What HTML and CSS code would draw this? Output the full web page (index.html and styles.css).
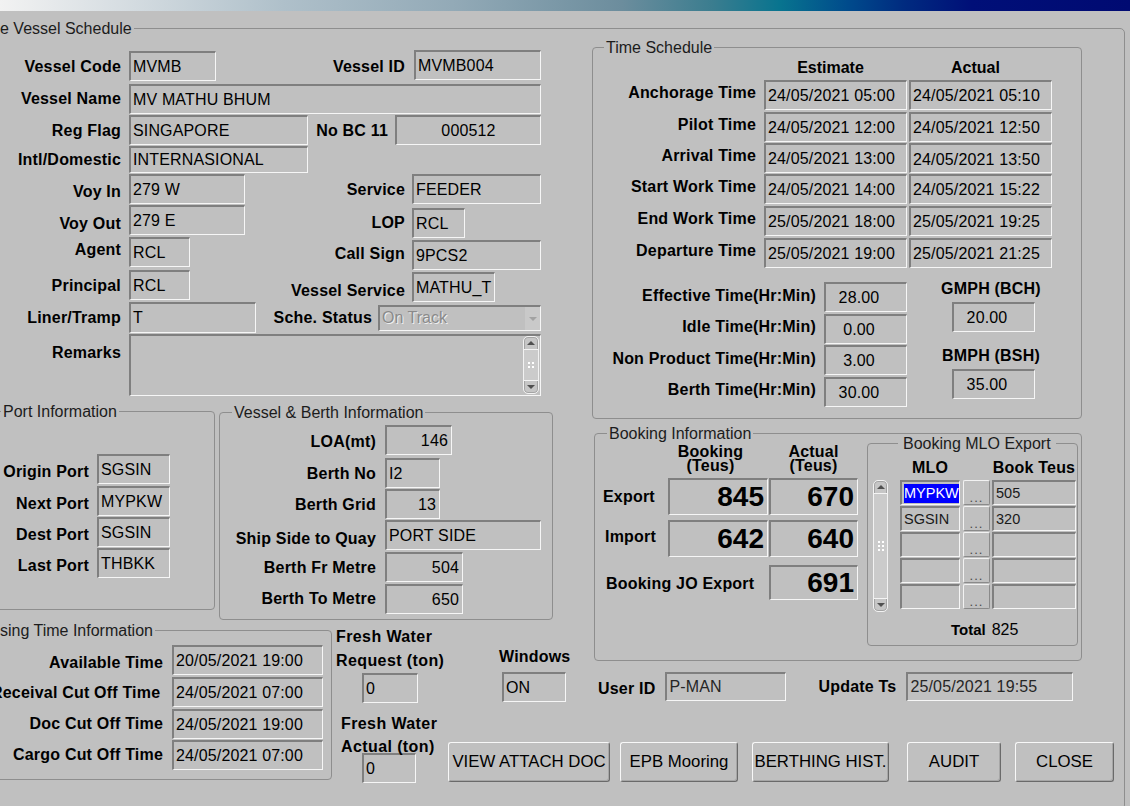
FILE: index.html
```html
<!DOCTYPE html>
<html>
<head>
<meta charset="utf-8">
<title>Vessel Schedule</title>
<link rel="stylesheet" href="styles.css">
</head>
<body>
<div class="titlebar"></div>
<fieldset class="grp frame">
  <legend class="lg lg-frame">e Vessel Schedule</legend>
  <div class="frame-grid">

    <div class="lt">
      <div class="vs-grid">
        <div class="lb c1">Vessel Code</div>
        <div class="fld c3 w87 mt1">MVMB</div>
        <div class="lb c4">Vessel ID</div>
        <div class="fld c6 w127 ml2">MVMB004</div>

        <div class="lb c1">Vessel Name</div>
        <div class="fld c3-7 mt1">MV MATHU BHUM</div>

        <div class="lb c1">Reg Flag</div>
        <div class="rowflex c3-7">
          <div class="fld w179">SINGAPORE</div>
          <div class="lb push">No BC 11</div>
          <div class="fld w146 ml7 ctr">000512</div>
        </div>

        <div class="lb c1">Intl/Domestic</div>
        <div class="fld c3 w179 h27">INTERNASIONAL</div>

        <div class="lb c1 dn5">Voy In</div>
        <div class="fld c3 w116">279 W</div>
        <div class="lb c4">Service</div>
        <div class="fld c6 w129">FEEDER</div>

        <div class="lb c1 dn6">Voy Out</div>
        <div class="fld c3 w116">279 E</div>
        <div class="lb c4 dn4">LOP</div>
        <div class="fld c6 w53 mt3">RCL</div>

        <div class="lb c1 up7">Agent</div>
        <div class="fld c3 w61">RCL</div>
        <div class="lb c4">Call Sign</div>
        <div class="fld c6 w129 mt3">9PCS2</div>

        <div class="lb c1">Principal</div>
        <div class="fld c3 w61">RCL</div>
        <div class="lb c4 dn10">Vessel Service</div>
        <div class="fld c6 w83 mt2">MATHU_T</div>

        <div class="lb c1">Liner/Tramp</div>
        <div class="rowflex c3-7">
          <div class="fld w127 h31">T</div>
          <div class="lb push">Sche. Status</div>
          <div class="combo ml6 mt3">
            <span class="combo-txt">On Track</span>
            <span class="combo-arrow"><span class="tri-dn light"></span></span>
          </div>
        </div>

        <div class="lb c1 top10">Remarks</div>
        <div class="fld memo c3-7">
          <div class="sb sb-memo">
            <div class="sb-btn sb-up"><span class="tri-up"></span></div>
            <div class="sb-track"><span class="grip grip2"></span></div>
            <div class="sb-btn sb-dn"><span class="tri-dn"></span></div>
          </div>
        </div>
      </div>

      <div class="pb">
        <fieldset class="grp port">
          <legend class="lg lg-port">Port Information</legend>
          <div class="port-grid">
            <div class="lb dn4">Origin Port</div><div class="fld w73">SGSIN</div>
            <div class="lb dn4">Next Port</div><div class="fld w73">MYPKW</div>
            <div class="lb dn4">Dest Port</div><div class="fld w73">SGSIN</div>
            <div class="lb dn4">Last Port</div><div class="fld w73">THBKK</div>
          </div>
        </fieldset>
        <fieldset class="grp berth">
          <legend class="lg lg-berth">Vessel &amp; Berth Information</legend>
          <div class="berth-grid">
            <div class="lb">LOA(mt)</div><div class="fld w67 r">146</div>
            <div class="lb">Berth No</div><div class="fld w55">I2</div>
            <div class="lb">Berth Grid</div><div class="fld w55 r">13</div>
            <div class="lb dn6">Ship Side to Quay</div><div class="fld w156">PORT SIDE</div>
            <div class="lb">Berth Fr Metre</div><div class="fld w78 r">504</div>
            <div class="lb">Berth To Metre</div><div class="fld w78 r">650</div>
          </div>
        </fieldset>
      </div>
    </div>

    <div class="rt">
      <fieldset class="grp ts">
        <legend class="lg lg-ts">Time Schedule</legend>
        <div class="ts-grid">
          <div></div><div class="hd">Estimate</div><div class="hd">Actual</div>
          <div class="lb tl">Anchorage Time</div><div class="fld w143">24/05/2021 05:00</div><div class="fld w143">24/05/2021 05:10</div>
          <div class="lb tl">Pilot Time</div><div class="fld w143">24/05/2021 12:00</div><div class="fld w143">24/05/2021 12:50</div>
          <div class="lb tl">Arrival Time</div><div class="fld w143">24/05/2021 13:00</div><div class="fld w143 lowtxt">24/05/2021 13:50</div>
          <div class="lb tl">Start Work Time</div><div class="fld w143">24/05/2021 14:00</div><div class="fld w143">24/05/2021 15:22</div>
          <div class="lb tl">End Work Time</div><div class="fld w143">25/05/2021 18:00</div><div class="fld w143">25/05/2021 19:25</div>
          <div class="lb tl">Departure Time</div><div class="fld w143">25/05/2021 19:00</div><div class="fld w143">25/05/2021 21:25</div>
        </div>
        <div class="eff">
          <div class="eff-grid">
            <div class="lb tl">Effective Time(Hr:Min)</div><div class="fld w83 c16">28.00</div>
            <div class="lb tl">Idle Time(Hr:Min)</div><div class="fld w83 c16">0.00</div>
            <div class="lb tl">Non Product Time(Hr:Min)</div><div class="fld w83 c16">3.00</div>
            <div class="lb tl">Berth Time(Hr:Min)</div><div class="fld w83 c16">30.00</div>
          </div>
          <div class="mph">
            <div class="lb mph-lb">GMPH (BCH)</div>
            <div class="fld w83 c16 mph-f">20.00</div>
            <div class="lb mph-lb mph-lb2">BMPH (BSH)</div>
            <div class="fld w83 c16 mph-f">35.00</div>
          </div>
        </div>
      </fieldset>

      <fieldset class="grp bk">
        <legend class="lg lg-bk">Booking Information</legend>
        <div class="bk-in">
          <div class="bk-grid">
            <div></div>
            <div class="bhd bhd-b"><div>Booking</div><div class="bhd2">(Teus)</div></div>
            <div class="bhd"><div>Actual</div><div class="bhd2">(Teus)</div></div>

            <div class="lb bl-exp">Export</div>
            <div class="fld big w100">845</div>
            <div class="fld big w89">670</div>

            <div class="lb bl-imp">Import</div>
            <div class="fld big w100 mt5">642</div>
            <div class="fld big w89 mt5">640</div>

            <div class="lb bl-jo">Booking JO Export</div>
            <div class="fld big w89 h35 mt8">691</div>
          </div>

          <fieldset class="grp mlo">
            <legend class="lg lg-mlo">Booking MLO Export</legend>
            <div class="mlo-head">
              <div class="mh w60">MLO</div>
              <div class="mh w84 mh2">Book Teus</div>
            </div>
            <div class="mlo-body">
              <div class="sb sb-mlo">
                <div class="sb-btn sb-up"><span class="tri-up"></span></div>
                <div class="sb-track"><span class="grip grip6"></span></div>
                <div class="sb-btn sb-dn"><span class="tri-dn"></span></div>
              </div>
              <div class="mlo-rows">
                <div class="mrow"><div class="fld sm w60"><span class="sel">MYPKW</span></div><div class="dots">...</div><div class="fld sm w84">505</div></div>
                <div class="mrow"><div class="fld sm w60">SGSIN</div><div class="dots">...</div><div class="fld sm w84">320</div></div>
                <div class="mrow"><div class="fld sm w60"></div><div class="dots">...</div><div class="fld sm w84"></div></div>
                <div class="mrow"><div class="fld sm w60"></div><div class="dots">...</div><div class="fld sm w84"></div></div>
                <div class="mrow"><div class="fld sm w60"></div><div class="dots">...</div><div class="fld sm w84"></div></div>
              </div>
            </div>
            <div class="total"><span class="tot-lb">Total</span><span class="tot-v">825</span></div>
          </fieldset>
        </div>
      </fieldset>

      <div class="user">
        <div class="lb ul1">User ID</div>
        <div class="fld w121 h29 ml10 dim">P-MAN</div>
        <div class="lb ul2">Update Ts</div>
        <div class="fld w167 h29 ml9 dim">25/05/2021 19:55</div>
      </div>
    </div>

    <fieldset class="grp closing">
      <legend class="lg lg-cl">sing Time Information</legend>
      <div class="cl-grid">
        <div class="lb dn4">Available Time</div><div class="fld w151">20/05/2021 19:00</div>
        <div class="lb pr6">Receival Cut Off Time</div><div class="fld w151">24/05/2021 07:00</div>
        <div class="lb up2">Doc Cut Off Time</div><div class="fld w151">24/05/2021 19:00</div>
        <div class="lb">Cargo Cut Off Time</div><div class="fld w151">24/05/2021 07:00</div>
      </div>
    </fieldset>

    <div class="fw">
      <div class="fw-t1">Fresh Water<br>Request (ton)</div>
      <div class="fld w56 fw-f1">0</div>
      <div class="fw-t2">Fresh Water<br>Actual (ton)</div>
      <div class="fld w54 fw-f2">0</div>
    </div>

    <div class="win">
      <div class="lb win-lb">Windows</div>
      <div class="fld w64 win-f">ON</div>
    </div>

    <div class="btns">
      <button class="btn b1">VIEW ATTACH DOC</button>
      <button class="btn b2">EPB Mooring</button>
      <button class="btn b3">BERTHING HIST.</button>
      <button class="btn b4">AUDIT</button>
      <button class="btn b5">CLOSE</button>
    </div>

  </div>
</fieldset>
</body>
</html>
```
FILE: styles.css
```css
* { box-sizing: border-box; }
html, body { margin: 0; padding: 0; }
body {
  width: 1130px;
  height: 806px;
  overflow: hidden;
  background: #c0c0c0;
  font-family: "Liberation Sans", Arial, sans-serif;
  font-size: 16px;
  color: #000;
}

.titlebar {
  height: 11px;
  background: linear-gradient(90deg, #f2f2f2 0%, #d3dbe0 12%, #afc0ca 25%, #93aab7 40%, #6c8d9d 55%, #3b7d8f 63%, #08748f 69%, #004b8c 75%, #002b80 80%, #000f78 86%, #000a72 100%);
}

/* group boxes */
.grp {
  margin: 0;
  padding: 0;
  min-inline-size: 0;
  border: 1px solid #8e8e8e;
  border-radius: 4px;
}
.lg {
  padding: 0 2px;
  font-size: 16px;
  line-height: 17px;
  color: #1c1c1c;
  white-space: nowrap;
}

.frame {
  margin: 9px 0 0 -12px;
  width: 1137px;
  height: 790px;
  border-radius: 5px;
}
.lg-frame { margin-left: 9px; }

.frame-grid {
  margin-left: 11px;
  width: 1124px;
  display: grid;
  grid-template-columns: 335px 112px 145px 532px;
  grid-template-rows: 583px 100px 60px;
}
.frame-grid > * { align-self: start; }

.lt { grid-column: 1 / 4; grid-row: 1; }
.rt { grid-column: 4; grid-row: 1 / 3; }
.closing { grid-column: 1; grid-row: 2 / 4; }
.fw { grid-column: 2; grid-row: 2 / 4; }
.win { grid-column: 3; grid-row: 2; }
.btns { grid-column: 3 / 5; grid-row: 3; }

/* labels & fields */
.lb {
  font-weight: bold;
  line-height: 18px;
  text-align: right;
  white-space: nowrap;
  align-self: center;
  letter-spacing: 0.2px;
}
.fld {
  height: 30px;
  align-self: start;
  display: flex;
  align-items: center;
  padding: 0 2px;
  white-space: nowrap;
  overflow: hidden;
  background: #c0c0c0;
  border-style: solid;
  border-width: 2px 1px 1px 2px;
  border-color: #7f7f7f #f6f6f6 #f6f6f6 #7f7f7f;
  font-size: 16px;
  line-height: 18px;
  letter-spacing: 0.15px;
  color: #000;
}
.fld.r { justify-content: flex-end; padding-right: 3px; }
.fld.ctr { justify-content: center; }
.fld.c16 { justify-content: center; padding-right: 16px; }
.fld.dim { color: #262626; }
.lowtxt { padding-top: 3px; }

.h27 { height: 27px; }
.h29 { height: 29px; }
.h31 { height: 31px; }
.h35 { height: 35px; }

.w53 { width: 53px; } .w54 { width: 54px; } .w55 { width: 55px; } .w56 { width: 56px; }
.w60 { width: 60px; } .w61 { width: 61px; } .w64 { width: 64px; } .w67 { width: 67px; }
.w73 { width: 73px; } .w78 { width: 78px; } .w83 { width: 83px; } .w84 { width: 84px; }
.w87 { width: 87px; } .w89 { width: 89px; } .w100 { width: 100px; } .w116 { width: 116px; }
.w121 { width: 121px; } .w127 { width: 127px; } .w129 { width: 129px; } .w143 { width: 143px; }
.w146 { width: 146px; } .w151 { width: 151px; } .w156 { width: 156px; } .w167 { width: 167px; }
.w179 { width: 179px; }

.mt1 { margin-top: 1px; } .mt2 { margin-top: 2px; } .mt3 { margin-top: 3px; }
.mt5 { margin-top: 5px; } .mt8 { margin-top: 8px; }
.ml2 { margin-left: 2px; } .ml6 { margin-left: 6px; } .ml7 { margin-left: 7px; }
.ml9 { margin-left: 9px; } .ml10 { margin-left: 10px; }
.dn4 { padding-top: 4px; } .dn5 { padding-top: 5px; } .dn6 { padding-top: 6px; }
.dn10 { padding-top: 10px; } .up2 { padding-bottom: 2px; } .up7 { padding-bottom: 7px; }
.pr6 { padding-right: 6px; }
.top10 { align-self: start; margin-top: 10px; }

/* vessel schedule grid */
.vs-grid {
  margin-top: 13px;
  display: grid;
  grid-template-columns: 121px 8px 179px 97px 7px 129px;
  grid-template-rows: 33px 32px 31px 28px 31px 32px 33px 32px 32px 62px;
}
.c1 { grid-column: 1; }
.c3 { grid-column: 3; }
.c4 { grid-column: 4; justify-self: end; }
.c6 { grid-column: 6; }
.c3-7 { grid-column: 3 / 7; }
.rowflex { display: flex; align-items: flex-start; }
.push { margin-left: auto; }

.combo {
  width: 163px;
  height: 26px;
  display: flex;
  border-style: solid;
  border-width: 2px 1px 1px 2px;
  border-color: #7f7f7f #f6f6f6 #f6f6f6 #7f7f7f;
}
.combo-txt {
  flex: 1;
  padding-left: 2px;
  line-height: 22px;
  color: #8a8a8a;
  text-shadow: 1px 1px 0 #f0f0f0;
}
.combo-arrow {
  width: 15px;
  background: #c9c9c9;
  display: flex;
  align-items: center;
  justify-content: center;
}

.memo {
  height: 62px;
  justify-content: flex-end;
  align-items: stretch;
  padding: 0 1px 1px 0;
}

/* scrollbars */
.sb {
  width: 16px;
  display: flex;
  flex-direction: column;
  background: #c6c6c6;
  border: 1px solid #f2f2f2;
  border-radius: 5px;
  box-shadow: inset 0 0 0 1px #a4a4a4;
}
.sb-btn {
  height: 13px;
  display: flex;
  align-items: center;
  justify-content: center;
}
.sb-up { border-bottom: 1px solid #f4f4f4; }
.sb-dn { border-top: 1px solid #f4f4f4; }
.sb-track {
  flex: 1;
  display: flex;
  align-items: center;
  justify-content: center;
  background: #cbcbcb;
}
.tri-up {
  width: 0; height: 0;
  border-left: 4px solid transparent;
  border-right: 4px solid transparent;
  border-bottom: 4px solid #505050;
}
.tri-dn {
  width: 0; height: 0;
  border-left: 4px solid transparent;
  border-right: 4px solid transparent;
  border-top: 4px solid #505050;
}
.tri-dn.light { border-top-color: #a2a2a2; }
.grip {
  display: block;
  background-image: radial-gradient(circle, #ffffff 0 1px, transparent 1.3px);
  background-size: 4px 4px;
}
.grip2 { width: 8px; height: 8px; }
.grip6 { width: 8px; height: 12px; }
.sb-mlo { width: 15px; height: 132px; margin-left: 5px; }

/* port / berth */
.pb { display: flex; align-items: flex-start; margin-top: 7px; }
.port { margin-left: -10px; width: 225px; }
.lg-port { margin-left: 10px; }
.port-grid {
  display: grid;
  grid-template-columns: 98px 73px;
  column-gap: 8px;
  grid-template-rows: 32px 31px 31px 31px;
  padding: 34px 0 30px;
}
.berth { margin: 1px 0 0 4px; width: 334px; }
.lg-berth { margin-left: 12px; }
.berth-grid {
  display: grid;
  grid-template-columns: 156px 156px;
  column-gap: 9px;
  grid-template-rows: 33px 31px 31px 32px 32px 30px;
  padding: 4px 0 5px;
}

/* time schedule */
.ts { margin-top: 2px; width: 490px; padding-bottom: 11px; }
.lg-ts { margin-left: 11px; }
.ts-grid {
  display: grid;
  grid-template-columns: 171px 145px 143px;
  grid-template-rows: 24px 32px 31px 31px 32px 32px 31px;
}
.ts-grid .lb { padding-right: 8px; }
.tl { padding-bottom: 6px; }
.hd {
  font-weight: bold;
  text-align: center;
  line-height: 24px;
  width: 143px;
  padding-right: 10px;
}
.eff { display: flex; align-items: flex-start; margin-top: 13px; }
.eff-grid {
  display: grid;
  grid-template-columns: 231px 83px;
  grid-template-rows: 32px 31px 32px 30px;
}
.eff-grid .lb { padding-right: 8px; padding-bottom: 5px; }
.mph { margin: -2px 0 0 34px; width: 100px; display: flex; flex-direction: column; }
.mph-lb { text-align: center; width: 100px; }
.mph-f { margin: 4px 0 0 11px; }
.mph-lb2 { margin-top: 15px; }

/* booking */
.bk { margin: 6px 0 0 2px; width: 488px; padding-bottom: 14px; }
.lg-bk { margin-left: 12px; }
.bk-in { display: flex; align-items: flex-start; }
.bk-grid {
  width: 263px;
  display: grid;
  grid-template-columns: 73px 101px 89px;
  grid-template-rows: 36px 37px 42px 43px;
}
.bhd {
  font-weight: bold;
  line-height: 14px;
  padding-top: 3px;
  text-align: center;
  letter-spacing: 0.2px;
}
.bhd-b { padding-right: 16px; }
.big {
  height: 37px;
  font-size: 28px;
  font-weight: bold;
  justify-content: flex-end;
  padding-right: 3px;
  letter-spacing: 0;
}
.big.h35 { height: 35px; }
.bl-exp { text-align: left; padding-left: 8px; }
.bl-imp { text-align: left; padding-left: 10px; align-self: start; margin-top: 13px; }
.bl-jo { grid-column: 1 / 3; text-align: left; padding-left: 11px; align-self: start; margin-top: 18px; }

.mlo { margin: -7px 0 0 9px; width: 211px; padding-bottom: 6px; }
.lg-mlo { margin-left: 30px; padding: 0 5px; }
.mlo-head { display: flex; padding: 7px 0 0 32px; }
.mh { font-weight: bold; line-height: 18px; text-align: center; white-space: nowrap; letter-spacing: 0.2px; }
.mh2 { margin-left: 32px; }
.mlo-body { display: flex; align-items: flex-start; margin-top: 3px; }
.mlo-rows { margin-left: 12px; }
.mrow { display: flex; height: 26px; }
.fld.sm { height: 25px; font-size: 14.5px; padding-left: 2px; color: #1a1a1a; letter-spacing: 0; }
.sel { background: #0000ff; color: #fff; line-height: 19px; padding-right: 1px; }
.dots {
  width: 27px;
  height: 25px;
  margin: 0 2px 0 3px;
  border: 1px solid;
  border-color: #f2f2f2 #8a8a8a #8a8a8a #f2f2f2;
  border-radius: 2px;
  display: flex;
  align-items: flex-end;
  justify-content: center;
  font-size: 13px;
  line-height: 9px;
  color: #4a4a4a;
  letter-spacing: 1px;
  padding-bottom: 2px;
}
.total { margin-top: 9px; padding-left: 83px; line-height: 18px; white-space: nowrap; }
.tot-lb { font-weight: bold; font-size: 15px; }
.tot-v { margin-left: 6px; }

.user { display: flex; align-items: flex-start; margin-top: 11px; padding-left: 6px; }
.ul1 { align-self: start; margin-top: 8px; }
.ul2 { align-self: start; margin: 6px 0 0 32px; }
.user .ml9 { margin-left: 10px; }

/* closing */
.closing { margin: 2px 0 0 -10px; width: 342px; }
.lg-cl { margin-left: 7px; }
.cl-grid {
  display: grid;
  grid-template-columns: 172px 151px;
  column-gap: 9px;
  grid-template-rows: 32px 32px 31px 30px;
  padding: 6px 0 9px;
}

/* fresh water */
.fw-t1, .fw-t2 { font-weight: bold; white-space: nowrap; letter-spacing: 0.4px; }
.fw-t1 { margin-top: 5px; padding-left: 1px; line-height: 24px; }
.fw-f1 { margin-left: 27px; }
.fw-t2 { margin-top: 9px; padding-left: 6px; line-height: 23px; }
.fw-f2 { margin: -5px 0 0 27px; }

/* windows */
.win { padding-left: 52px; }
.win-lb { text-align: left; margin-top: 28px; }
.win-f { margin: 6px 0 0 3px; }

/* buttons */
.btns { display: flex; margin-top: 22px; padding-left: 1px; }
.btn {
  height: 40px;
  padding: 0;
  background: #c0c0c0;
  border: 1px solid;
  border-color: #f8f8f8 #6a6a6a #6a6a6a #f8f8f8;
  border-radius: 3px;
  box-shadow: inset -1px -1px 0 #a6a6a6;
  font-family: "Liberation Sans", Arial, sans-serif;
  font-size: 16.8px;
  color: #000;
  white-space: nowrap;
}
.b1 { width: 162px; }
.b2 { width: 118px; margin-left: 10px; }
.b3 { width: 137px; margin-left: 14px; }
.b4 { width: 94px; margin-left: 18px; }
.b5 { width: 99px; margin-left: 14px; }
```
